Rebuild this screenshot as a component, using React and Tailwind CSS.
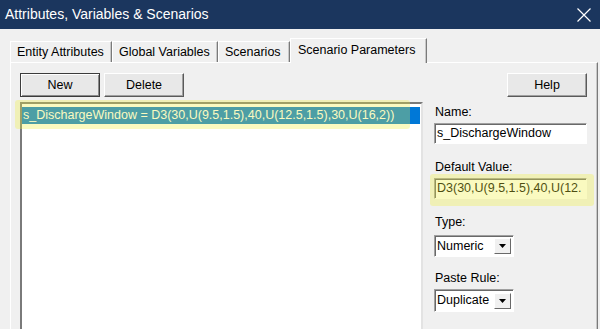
import React from 'react';

const tabs = [
  { label: 'Entity Attributes', w: 'w-[102px]' },
  { label: 'Global Variables', w: 'w-[106px]' },
  { label: 'Scenarios', w: 'w-[72px]' },
];

const Button = ({ children, primary }) => (
  <button
    className={`h-[24px] w-[80px] bg-[#e8e8e8] text-[12.5px] text-black flex items-center justify-center border ${
      primary
        ? 'border-[#3c3c3c] shadow-[inset_1px_1px_0_#ffffff,inset_-1px_-1px_0_#8a8a8a]'
        : 'border-t-white border-l-white border-r-[#5a5a5a] border-b-[#5a5a5a] shadow-[inset_-1px_-1px_0_#a0a0a0]'
    }`}
  >
    {children}
  </button>
);

const Field = ({ children, className = '' }) => (
  <div
    className={`h-[21px] w-[153px] bg-white border border-t-[#a0a0a0] border-l-[#a0a0a0] border-r-white border-b-white shadow-[inset_1px_1px_0_#696969] pl-[2px] flex items-center text-[12.5px] whitespace-nowrap overflow-hidden ${className}`}
  >
    {children}
  </div>
);

const Combo = ({ value, className = '' }) => (
  <div
    className={`w-[80px] bg-white border border-t-[#a0a0a0] border-l-[#a0a0a0] border-r-white border-b-white shadow-[inset_1px_1px_0_#696969] flex items-center ${className}`}
  >
    <span className="flex-1 pl-[2px] text-[12.5px] whitespace-nowrap overflow-hidden">{value}</span>
    <span className="mr-[2px] h-[16px] w-[17px] bg-[#f0f0f0] border border-t-white border-l-white border-r-[#696969] border-b-[#696969] flex items-center justify-center">
      <svg width="7" height="4" viewBox="0 0 7 4">
        <path d="M0 0h7L3.5 4z" fill="#000" />
      </svg>
    </span>
  </div>
);

export default function App() {
  return (
    <div className="relative w-[600px] h-[329px] overflow-hidden bg-[#f0f0f0] text-black font-['Liberation_Sans',Arial,sans-serif]">
      {/* Title bar */}
      <div className="h-[29px] bg-[#1b365e] flex items-center justify-between pl-[5px] pr-[8px]">
        <span className="text-white text-[14px]">Attributes, Variables &amp; Scenarios</span>
        <svg width="14" height="14" viewBox="0 0 14 14" className="mr-[1px]">
          <path d="M0.5 0.5L13.5 13.5M13.5 0.5L0.5 13.5" stroke="#fff" strokeWidth="1.2" />
        </svg>
      </div>

      {/* Tabs */}
      <div className="mt-[9px] ml-[10px] flex items-end h-[24px] relative z-10">
        {tabs.map(t => (
          <div
            key={t.label}
            className={`${t.w} h-[21px] border-t border-l border-t-white border-l-white border-r border-r-[#7a7a7a] shadow-[inset_-1px_0_0_#c8c8c8] flex items-center pl-[6px] text-[12.5px] whitespace-nowrap`}
          >
            {t.label}
          </div>
        ))}
        <div className="w-[137px] h-[25px] -mb-[1px] bg-[#f0f0f0] border-t border-l border-t-white border-l-white border-r border-r-[#7a7a7a] shadow-[inset_-1px_0_0_#c8c8c8] flex items-center pl-[7px] pb-[1px] text-[12.5px] whitespace-nowrap">
          Scenario Parameters
        </div>
      </div>

      {/* Panel */}
      <div className="ml-[10px] mr-[2px] h-[280px] border-t border-l border-t-white border-l-white border-r border-r-[#7a7a7a] shadow-[inset_-1px_0_0_#c8c8c8] pl-[9px] pr-[10px] pt-[10px]">
        <div className="flex items-center">
          <div className="flex gap-[4px]">
            <Button primary>New</Button>
            <Button>Delete</Button>
          </div>
          <div className="ml-auto">
            <Button>Help</Button>
          </div>
        </div>

        <div className="mt-[5px] flex">
          {/* List */}
          <div className="w-[404px] h-[240px] bg-white border-2 border-t-[#7a7a7a] border-l-[#7a7a7a] border-r-[#e3e3e3] border-b-[#e3e3e3] pt-[3px] pr-[1px]">
            <div className="h-[17px] bg-[#0078d7] text-white text-[12.5px] pl-[1px] flex items-center whitespace-nowrap">
              s_DischargeWindow = D3(30,U(9.5,1.5),40,U(12.5,1.5),30,U(16,2))
            </div>
          </div>

          {/* Right column */}
          <div className="ml-[11px] flex flex-col text-[12.5px]">
            <div className="pt-[2px] leading-[16px] pl-[1px]">Name:</div>
            <Field className="mt-[3px]">s_DischargeWindow</Field>
            <div className="mt-[15px] leading-[16px] pl-[1px]">Default Value:</div>
            <Field className="mt-[3px]">D3(30,U(9.5,1.5),40,U(12.</Field>
            <div className="mt-[15px] leading-[16px] pl-[1px]">Type:</div>
            <Combo value="Numeric" className="mt-[5px] h-[22px]" />
            <div className="mt-[13px] leading-[16px] pl-[1px]">Paste Rule:</div>
            <Combo value="Duplicate" className="mt-[3px] h-[23px]" />
          </div>
        </div>
      </div>

      {/* Highlighter marks (annotation overlay) */}
      <div className="pointer-events-none absolute left-[15px] top-[100px] w-[395px] h-[29px] rounded-[3px] bg-[rgba(240,240,60,0.32)]" />
      <div className="pointer-events-none absolute left-[430px] top-[174px] w-[164px] h-[32px] rounded-[3px] bg-[rgba(240,240,60,0.32)]" />
    </div>
  );
}
